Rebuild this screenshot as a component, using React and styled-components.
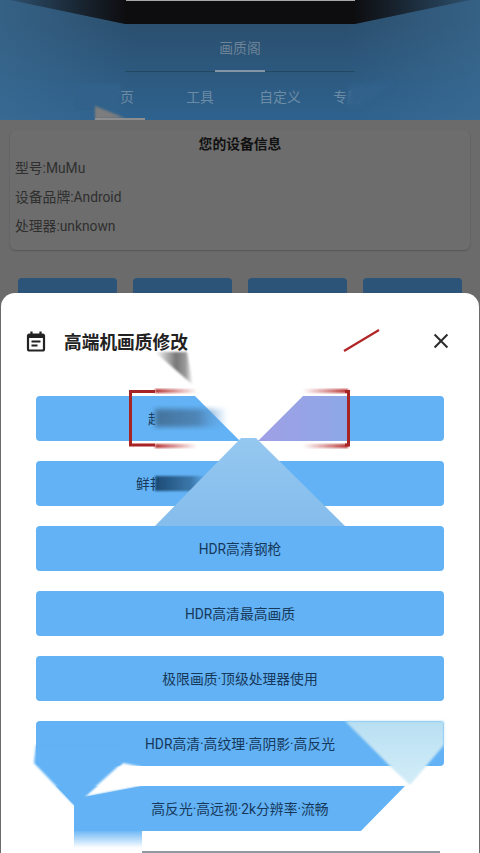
import React from 'react';
import styled, { createGlobalStyle } from 'styled-components';

const Global = createGlobalStyle`
  html, body { margin: 0; padding: 0; background: #6b6b6b; }
  body { font-family: Roboto, "Noto Sans CJK SC", sans-serif; }
  #root { width: 480px; height: 853px; overflow: hidden; }
`;

const Page = styled.div`
  width: 480px;
  height: 853px;
  position: relative;
  overflow: hidden;
  background: #6b6b6b;
`;

const Header = styled.header`
  height: 120px;
  background:
    linear-gradient(90deg, rgba(62, 112, 152, 0.55), rgba(62, 112, 152, 0) 28%, rgba(62, 112, 152, 0) 72%, rgba(62, 112, 152, 0.55)),
    linear-gradient(180deg, #2b4f6e 20%, #2e628e 100%);
  display: flex;
  flex-direction: column;
  align-items: center;
  padding-top: 24px;
  box-sizing: border-box;
`;

const Title = styled.div`
  height: 48px;
  width: 230px;
  display: flex;
  align-items: center;
  justify-content: center;
  padding-bottom: 2px;
  box-sizing: border-box;
  color: #6c8398;
  font-size: 13.8px;
  border-bottom: 1px solid #264762;
  position: relative;
  &::after {
    content: '';
    position: absolute;
    bottom: -1px;
    left: 90px;
    width: 50px;
    height: 2px;
    background: #8296a6;
  }
`;

const Tabs = styled.nav`
  flex: 1;
  width: 100%;
  display: flex;
  align-items: center;
  padding-left: 80px;
  box-sizing: border-box;
`;

const Tab = styled.div`
  width: ${p => p.$w}px;
  text-align: center;
  color: #6c8ba4;
  font-size: 13.8px;
  white-space: nowrap;
`;

const Body = styled.main`
  padding: 10px;
`;

const InfoCard = styled.section`
  height: 120px;
  border-radius: 6px;
  background: #6d6d6d;
  box-shadow: 0 1px 2px rgba(0, 0, 0, 0.2);
  padding: 5px;
  box-sizing: border-box;
`;

const InfoTitle = styled.h2`
  margin: 0;
  font-size: 13.8px;
  line-height: 19px;
  font-weight: 700;
  color: #111;
  text-align: center;
`;

const InfoLine = styled.p`
  margin: 0;
  font-size: 13.8px;
  line-height: 29px;
  color: #2f2f2f;
`;

const QuickRow = styled.div`
  display: grid;
  grid-template-columns: repeat(4, 99px);
  justify-content: space-between;
  padding: 28px 8px 0;
`;

const QuickButton = styled.div`
  height: 40px;
  background: #2b5478;
  border-radius: 4px;
`;

const Sheet = styled.section`
  position: absolute;
  left: 1px;
  right: 1px;
  top: 293px;
  bottom: 0;
  background: #fff;
  border-radius: 14px 14px 0 0;
  padding: 0 35px;
`;

const SheetHead = styled.div`
  height: 103px;
  margin: 0 -8px 0 -11px;
  display: flex;
  align-items: center;
  gap: 17px;
  padding-bottom: 8px;
  box-sizing: border-box;
`;

const SheetTitle = styled.h1`
  flex: 1;
  margin: 0;
  font-size: 17.7px;
  font-weight: 700;
  color: #222;
`;

const Options = styled.div`
  display: flex;
  flex-direction: column;
  gap: 20px;
`;

const Option = styled.div`
  flex: none;
  height: 45px;
  background: #62b2f5;
  border-radius: 4px;
  display: flex;
  align-items: center;
  justify-content: ${p => (p.$indent ? 'flex-start' : 'center')};
  padding: 0 0 2px ${p => p.$indent || 0}px;
  box-sizing: border-box;
  color: #16385a;
  font-size: 13.8px;
  white-space: nowrap;
`;

const Overlay = styled.svg`
  position: absolute;
  inset: 0;
  pointer-events: none;
`;

const CalendarIcon = () => (
  <svg width="22" height="22" viewBox="0 0 22 22" fill="none" stroke="#222" strokeWidth="2.2">
    <rect x="3" y="4.5" width="16" height="16" rx="1.5" />
    <path d="M3 6h16" strokeWidth="4" />
    <path d="M6.5 1.5v3M15.500 1.500v3" />
    <path d="M6.500 11.500h9M6.500 15.500h6" strokeWidth="1.800" />
  </svg>
);

const CloseIcon = () => (
  <svg width="22" height="22" viewBox="0 0 24 24" fill="none" stroke="#2c2c2c" strokeWidth="2.200">
    <path d="M5 5l14 14M19 5L5 19" />
  </svg>
);

// warped pieces of the shot, all in one drawing over the page
const Warp = () => (
  <Overlay width="480" height="853" viewBox="0 0 480 853">
    <defs>
      <filter id="b1" x="-20%" y="-20%" width="140%" height="140%"><feGaussianBlur stdDeviation="1" /></filter>
      <filter id="b2" x="-20%" y="-20%" width="140%" height="140%"><feGaussianBlur stdDeviation="2.500" /></filter>
      <linearGradient id="topBar" x1="0" x2="1" y1="0" y2="0">
        <stop offset="0" stopColor="#101114" stopOpacity="0.2" />
        <stop offset="0.25" stopColor="#0e0e11" />
        <stop offset="0.75" stopColor="#0e0e11" />
        <stop offset="1" stopColor="#101114" stopOpacity="0.2" />
      </linearGradient>
      <linearGradient id="smear" x1="0" x2="1" y1="0" y2="0">
        <stop offset="0" stopColor="#fff" />
        <stop offset="0.55" stopColor="#777" />
        <stop offset="0.8" stopColor="#999" />
        <stop offset="1" stopColor="#fff" />
      </linearGradient>
      <linearGradient id="leftBand" x1="0" x2="1" y1="0" y2="0">
        <stop offset="0" stopColor="#43739c" />
        <stop offset="0.6" stopColor="#4f86b8" />
        <stop offset="1" stopColor="#62a6e4" stopOpacity="0" />
      </linearGradient>
      <linearGradient id="darkBand" x1="0" x2="1" y1="0" y2="0">
        <stop offset="0" stopColor="#1c4a74" />
        <stop offset="0.7" stopColor="#3c78ab" />
        <stop offset="1" stopColor="#62b2f5" />
      </linearGradient>
      <linearGradient id="lavender" x1="0" x2="1" y1="0" y2="0">
        <stop offset="0" stopColor="#a09fe6" />
        <stop offset="1" stopColor="#8ca8e6" />
      </linearGradient>
      <linearGradient id="redFade" x1="0" x2="1" y1="0" y2="0">
        <stop offset="0" stopColor="#b52a2a" />
        <stop offset="1" stopColor="#b52a2a" stopOpacity="0" />
      </linearGradient>
      <linearGradient id="redFadeR" x1="1" x2="0" y1="0" y2="0">
        <stop offset="0" stopColor="#b52a2a" />
        <stop offset="1" stopColor="#b52a2a" stopOpacity="0" />
      </linearGradient>
      <linearGradient id="tri" x1="0" x2="0" y1="0" y2="1">
        <stop offset="0" stopColor="#95c8f0" />
        <stop offset="1" stopColor="#84bcec" />
      </linearGradient>
      <linearGradient id="pale" x1="0" x2="0" y1="0" y2="1">
        <stop offset="0" stopColor="#b8dff2" />
        <stop offset="1" stopColor="#d3edf8" />
      </linearGradient>
      <linearGradient id="rowFade" x1="0" x2="0" y1="0" y2="1">
        <stop offset="0" stopColor="#62b2f5" />
        <stop offset="0.7" stopColor="#62b2f5" />
        <stop offset="1" stopColor="#62b2f5" stopOpacity="0" />
      </linearGradient>
    </defs>

    {/* header: black bar at the top, smeared tabs */}
    <polygon points="10,0 470,0 355,24 125,24" fill="url(#topBar)" />
    <rect x="125" y="0" width="230" height="24" fill="#0d0d10" />
    <rect x="126" y="0" width="229" height="1" fill="#a8a8a8" />
    <polygon points="75,84 120,84 120,110 75,110" fill="#31628b" filter="url(#b1)" />
    <polygon points="95,106 125,118 95,119" fill="#7d7d7d" filter="url(#b1)" />
    <rect x="95" y="118" width="50" height="2" fill="#8e8e8e" />
    <polygon points="350,86 395,82 360,106 345,106" fill="#30628c" filter="url(#b2)" />

    {/* rows 1 and 2, the X in the middle */}
    <rect x="155" y="380" width="190" height="146" fill="#fff" />
    <polygon points="155,352 187,352 193,385" fill="url(#smear)" filter="url(#b1)" />
    <polygon points="155,396 195,396 240,441 155,441" fill="#62b2f5" />
    <rect x="155" y="409" width="72" height="18" fill="url(#leftBand)" filter="url(#b2)" />
    <rect x="155" y="389" width="42" height="4" fill="url(#redFade)" filter="url(#b1)" />
    <rect x="155" y="444" width="42" height="4" fill="url(#redFade)" filter="url(#b1)" />
    <polygon points="303,396 349,396 349,441 258,441" fill="url(#lavender)" />
    <rect x="303" y="389" width="45" height="4" fill="url(#redFadeR)" filter="url(#b1)" />
    <rect x="303" y="444" width="45" height="4" fill="url(#redFadeR)" filter="url(#b1)" />
    <rect x="155" y="461" width="190" height="45" fill="#62b2f5" />
    <rect x="155" y="476" width="52" height="15" fill="url(#darkBand)" filter="url(#b1)" />
    <polygon points="241,438 256,438 345,526 155,526" fill="url(#tri)" />

    {/* red frame and its stray line */}
    <path d="M155 391.500H130.500V445H155" fill="none" stroke="#a82323" strokeWidth="3" />
    <path d="M345 391.500H348.500V445H345" fill="none" stroke="#a82323" strokeWidth="3" />
    <line x1="344" y1="351" x2="379" y2="330" stroke="#b02626" strokeWidth="2.200" />

    {/* rows 6 and 7 */}
    <polygon points="345,721 444,721 444,745 410,785 393,769" fill="url(#pale)" filter="url(#b1)" />
    <polygon points="406,785 450,785 450,836 356,836" fill="#fff" />
    <polygon points="142,767 142,786 84,797 123,763" fill="#fff" filter="url(#b1)" />
    <polygon points="28,767 33,762 74,805 74,838 28,838" fill="#fff" />
    <polygon points="36,745 122,745 123,762 84,797 74,805 34,763" fill="#62b2f5" filter="url(#b1)" />
    <polygon points="74,805 84,797 142,786 142,848 74,848" fill="url(#rowFade)" />
    <rect x="142" y="851" width="298" height="2" fill="#8f9aa3" />
  </Overlay>
);

const options = [
  { label: '超', indent: 112 },
  { label: '鲜艳', indent: 100 },
  { label: 'HDR高清钢枪' },
  { label: 'HDR高清最高画质' },
  { label: '极限画质·顶级处理器使用' },
  { label: 'HDR高清·高纹理·高阴影·高反光' },
  { label: '高反光·高远视·2k分辨率·流畅' },
];

export default function App() {
  return (
    <Page>
      <Global />
      <Header>
        <Title>画质阁</Title>
        <Tabs>
          <Tab $w={80}>首页</Tab>
          <Tab $w={80}>工具</Tab>
          <Tab $w={80}>自定义</Tab>
          <Tab $w={54}>专属</Tab>
        </Tabs>
      </Header>
      <Body>
        <InfoCard>
          <InfoTitle>您的设备信息</InfoTitle>
          <InfoLine>型号:MuMu</InfoLine>
          <InfoLine>设备品牌:Android</InfoLine>
          <InfoLine>处理器:unknown</InfoLine>
        </InfoCard>
        <QuickRow>
          <QuickButton />
          <QuickButton />
          <QuickButton />
          <QuickButton />
        </QuickRow>
      </Body>
      <Sheet>
        <SheetHead>
          <CalendarIcon />
          <SheetTitle>高端机画质修改</SheetTitle>
          <CloseIcon />
        </SheetHead>
        <Options>
          {options.map(o => <Option key={o.label} $indent={o.indent}>{o.label}</Option>)}
        </Options>
      </Sheet>
      <Warp />
    </Page>
  );
}
